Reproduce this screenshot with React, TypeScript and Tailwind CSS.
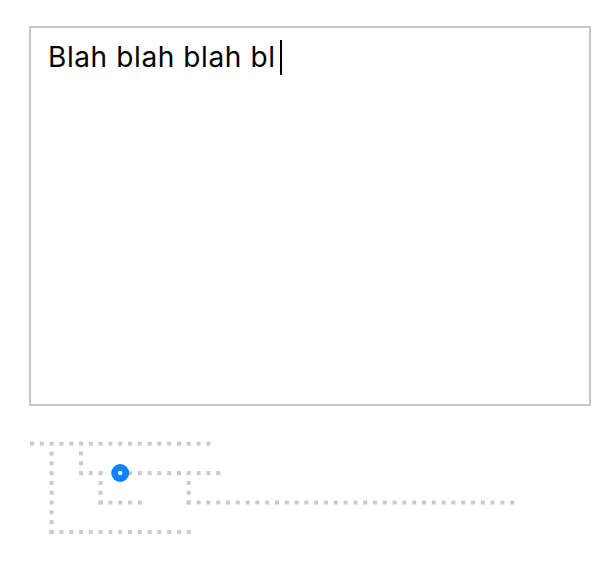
const P = 9.8;
const X0 = 30;
const Y0 = 441.7;

type Seg = [number, number, number, number]; // [col0,row0,col1,row1]

const segs: Seg[] = [
  [0, 0, 18, 0],
  [2, 1, 2, 9],
  [2, 9, 16, 9],
  [5, 1, 5, 3],
  [5, 3, 7, 3],
  [10, 3, 19, 3],
  [7, 4, 7, 6],
  [7, 6, 11, 6],
  [16, 4, 16, 6],
  [16, 6, 49, 6],
];

const dots = () => {
  const out: { x: number; y: number }[] = [];
  segs.forEach(([c0, r0, c1, r1]) => {
    for (let c = c0; c <= c1; c++) {
      for (let r = r0; r <= r1; r++) {
        out.push({ x: X0 + c * P, y: Y0 + r * P });
      }
    }
  });
  return out;
};

const Tree = () => (
  <svg width="612" height="140" viewBox="0 420 612 140" className="block">
    {dots().map((d, i) => (
      <rect key={i} x={d.x} y={d.y} width="4" height="4" fill="#cbcbcb" />
    ))}
    <circle cx="120.2" cy="473" r="9" fill="#0a84ff" />
    <circle cx="120.2" cy="473" r="2.2" fill="#ffffff" />
  </svg>
);

export default function App() {
  return (
    <div className="w-[612px] h-[563px] bg-white relative overflow-hidden font-['Inter',sans-serif]">
      <div className="pt-[26px] pl-[29px]">
        <div className="w-[562px] h-[380px] border-2 border-[#c8c8c8] px-[17px] pt-[11px]">
          <div className="flex items-start text-[28px] leading-[36px] tracking-[0.6px] text-black">
            <span>Blah blah blah bl</span>
            <span className="ml-[4px] mt-[1px] w-[2px] h-[35px] bg-black" />
          </div>
        </div>
      </div>
      <div className="absolute left-0 top-[420px]">
        <Tree />
      </div>
    </div>
  );
}
